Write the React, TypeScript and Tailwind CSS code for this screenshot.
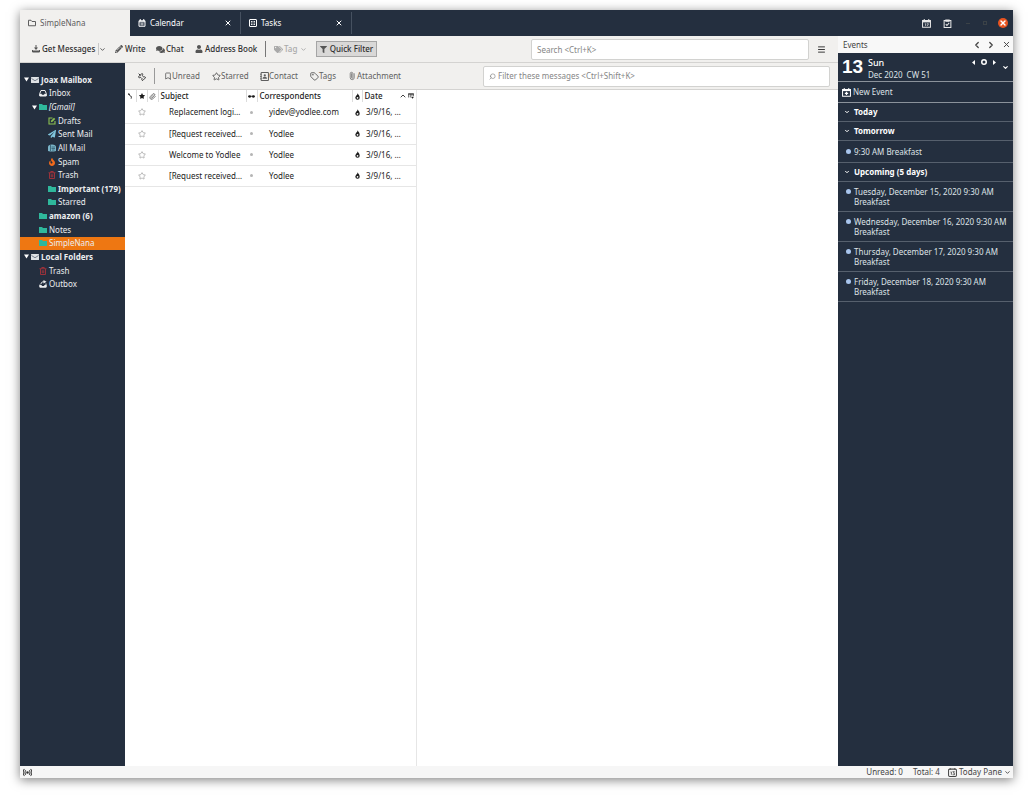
import type { ReactNode } from "react";
import { FaComments, FaFilter, FaFire, FaPaperPlane, FaPencilAlt, FaStar, FaTags, FaUser } from "react-icons/fa";
import { Bookmark, ChevronDown, ChevronLeft, ChevronRight, ChevronUp, Menu, Paperclip, Pin, Search, Star, Tag, X } from "lucide-react";

type IconProps = { className?: string };

function Svg({ className = "", children }: { className?: string; children: ReactNode }) {
  return (
    <svg viewBox="0 0 16 16" fill="none" stroke="currentColor" strokeWidth="1.8" aria-hidden="true" className={`shrink-0 ${className}`}>
      {children}
    </svg>
  );
}

const FolderOutline = ({ className }: IconProps) => (
  <Svg className={className}>
    <path d="M1 13.500v-11h5l2 2.500h7v8.500z" strokeLinejoin="round" strokeWidth="2" />
  </Svg>
);
const FolderSolid = ({ className }: IconProps) => (
  <Svg className={className}>
    <path d="M0 2h6l2 2h8v10H0z" fill="currentColor" stroke="none" />
  </Svg>
);
const CalendarTab = ({ className }: IconProps) => (
  <Svg className={className}>
    <path d="M2 3.500h12v11H2zM4.500 0v4M11.500 0v4M2 5.500h12" strokeWidth="2" />
    <path d="M5 8.500h6M5 11.500h6" strokeWidth="1.500" />
  </Svg>
);
const TasksIcon = ({ className }: IconProps) => (
  <Svg className={className}>
    <rect x="1" y="1" width="14" height="14" rx="1" strokeWidth="2" />
    <path d="M4 5h3M9 5h3M4 8h3M9 8h3M4 11h3M9 11h3" />
  </Svg>
);
const CalendarDay = ({ className }: IconProps) => (
  <Svg className={className}>
    <path d="M1 2.500h14v12H1zM4 0v3M12 0v3" />
    <path d="M1 4.500h14" strokeWidth="3" />
    <path d="M5 8.500h1.500v4M8.500 8.500h3l-2 4" strokeWidth="1.300" />
  </Svg>
);
const NewEventIcon = ({ className }: IconProps) => (
  <Svg className={className}>
    <path d="M1 2.500h14v12H1zM4 0v3M12 0v3" />
    <path d="M1 4h14" strokeWidth="3" />
    <path d="M8 6.500v6M5 9.500h6" strokeWidth="2.200" />
  </Svg>
);
const ClipboardCheck = ({ className }: IconProps) => (
  <Svg className={className}>
    <path d="M2 2.500h12v12.500H2z" />
    <path d="M5 2h6v2H5z" fill="currentColor" />
    <path d="M5 9l2 2.500L11 7" />
  </Svg>
);
const DownloadIcon = ({ className }: IconProps) => (
  <Svg className={className}>
    <path d="M8 0v7M1 10v4h14v-4" strokeWidth="2" />
    <path d="M4 5h8L8 10z" fill="currentColor" stroke="none" />
    <path d="M1 12.500h14" strokeWidth="3" />
  </Svg>
);
const MailIcon = ({ className }: IconProps) => (
  <svg viewBox="0 0 16 16" aria-hidden="true" className={`shrink-0 ${className}`}>
    <rect y="2" width="16" height="12" rx="1" fill="#dfe2e5" />
    <path d="M1 5l7 4.500L15 5" fill="none" stroke="#5a6573" strokeWidth="1.600" />
  </svg>
);
const InboxIcon = ({ className }: IconProps) => (
  <Svg className={className}>
    <path d="M1.500 14V9L4 3h8l2.500 6v5z" strokeWidth="2" />
    <path d="M1 9.500h4l1 2h4l1-2h4V14H1z" fill="currentColor" stroke="none" />
  </Svg>
);
const OutboxIcon = ({ className }: IconProps) => (
  <Svg className={className}>
    <path d="M2 9v5h12V7" strokeWidth="2" />
    <path d="M1 10h4l1 2h4l1-2h4v5H1z" fill="currentColor" stroke="none" />
    <path d="M4 8c0-3 2-4.500 6-4.500" strokeWidth="2" />
    <path d="M9 0l6 3.500L9 7z" fill="currentColor" stroke="none" />
  </Svg>
);
const DraftIcon = ({ className }: IconProps) => (
  <Svg className={className}>
    <path d="M9 2H2v12h12V8" strokeWidth="2.200" />
    <path d="M5.500 10.500l1-3.500L12 1.500 14.500 4 9 9.500z" fill="currentColor" stroke="none" />
  </Svg>
);
const ArchiveIcon = ({ className }: IconProps) => (
  <svg viewBox="0 0 16 16" aria-hidden="true" className={`shrink-0 ${className}`}>
    <path d="M0 14V6c0-3 3-5 8-5s8 2 8 5v8l-4 1H4z" fill="#79b3c7" />
    <path d="M5 2v12M7 6h7M7 9h7M8 12h5" stroke="#2f5568" strokeWidth="1.500" />
  </svg>
);
const TrashIcon = ({ className }: IconProps) => (
  <Svg className={className}>
    <path d="M1 3.500h14M5.500 3V1h5v2M3 4v11h10V4M6.500 6.500v6M9.500 6.500v6" />
  </Svg>
);
const ContactIcon = ({ className }: IconProps) => (
  <Svg className={className}>
    <rect x="2" y="1" width="13" height="14" rx="1" />
    <circle cx="8.500" cy="5.800" r="2" fill="currentColor" stroke="none" />
    <path d="M4.500 12c0-4.500 8-4.500 8 0z" fill="currentColor" stroke="none" />
    <path d="M0 4h3M0 8h3M0 12h3" strokeWidth="1.300" />
  </Svg>
);
const ThreadIcon = ({ className }: IconProps) => (
  <Svg className={className}>
    <path d="M4 2c4 0 1 5 5 6s3 2 2 7" strokeWidth="2.500" />
    <circle cx="5" cy="3" r="2" fill="currentColor" stroke="none" />
  </Svg>
);
const GlassesIcon = ({ className }: IconProps) => (
  <Svg className={className}>
    <circle cx="3.800" cy="8" r="3" fill="currentColor" stroke="none" />
    <circle cx="12.200" cy="8" r="3" fill="currentColor" stroke="none" />
    <path d="M0 7.500h16" strokeWidth="2" />
  </Svg>
);
const FlameIcon = ({ className }: IconProps) => (
  <svg viewBox="0 0 16 16" aria-hidden="true" className={`shrink-0 ${className}`}>
    <path d="M8 0c0 3 5 5 5 10a5 5 0 0 1-10 1c0-3 2-3 2.500-6C7 6 8 3 8 0z" fill="#1c1c1c" />
    <circle cx="8" cy="11" r="2" fill="#fff" />
  </svg>
);
const ColumnsIcon = ({ className }: IconProps) => (
  <Svg className={className}>
    <path d="M1 12V2h14v6M1 3h14M6 3v9M10.500 3v5" />
    <path d="M8 10h8l-4 5z" fill="currentColor" stroke="none" />
  </Svg>
);
const BroadcastIcon = ({ className }: IconProps) => (
  <Svg className={className}>
    <circle cx="8" cy="8" r="2.200" fill="currentColor" stroke="none" />
    <path d="M5 4c-2 2-2 6 0 8M11 4c2 2 2 6 0 8M2.500 2c-3 3-3 9 0 12M13.500 2c3 3 3 9 0 12" />
  </Svg>
);
const TodayIcon = ({ className }: IconProps) => (
  <Svg className={className}>
    <rect x="1" y="2" width="14" height="13" rx="2" />
    <path d="M4 0v3M12 0v3M4.500 7H6v5M8 6.500h3.500l-2 2.500 2 .5v2.500H8" strokeWidth="1.400" />
  </Svg>
);

type Folder = { name: string; icon: ReactNode; level: number; open?: boolean; style?: string; selected?: boolean };

const teal = <FolderSolid className="size-2 text-[#2fb89c]" />;
const trash = <TrashIcon className="size-2 text-[#a8333b]" />;
const folders: Folder[] = [
  { name: "Joax Mailbox", icon: <MailIcon className="size-2" />, level: 0, open: true, style: "font-bold" },
  { name: "Inbox", icon: <InboxIcon className="size-2" />, level: 1 },
  { name: "[Gmail]", icon: teal, level: 1, open: true, style: "italic" },
  { name: "Drafts", icon: <DraftIcon className="size-2 text-[#8cc152]" />, level: 2 },
  { name: "Sent Mail", icon: <FaPaperPlane className="size-2 shrink-0 text-[#7fc4dc]" />, level: 2 },
  { name: "All Mail", icon: <ArchiveIcon className="size-2" />, level: 2 },
  { name: "Spam", icon: <FaFire className="size-2 shrink-0 text-[#f06a1c]" />, level: 2 },
  { name: "Trash", icon: trash, level: 2 },
  { name: "Important (179)", icon: teal, level: 2, style: "font-bold" },
  { name: "Starred", icon: teal, level: 2 },
  { name: "amazon (6)", icon: teal, level: 1, style: "font-bold" },
  { name: "Notes", icon: teal, level: 1 },
  { name: "SimpleNana", icon: teal, level: 1, selected: true },
  { name: "Local Folders", icon: <MailIcon className="size-2" />, level: 0, open: true, style: "font-bold" },
  { name: "Trash", icon: trash, level: 1 },
  { name: "Outbox", icon: <OutboxIcon className="size-2" />, level: 1 },
];
const indents = ["pl-0.5", "pl-2.5", "pl-[19px]"];

const messages = [
  ["Replacement logi…", "yidev@yodlee.com"],
  ["[Request received…", "Yodlee"],
  ["Welcome to Yodlee", "Yodlee"],
  ["[Request received…", "Yodlee"],
];

const upcoming = ["Tuesday, December 15, 2020 9:30 AM", "Wednesday, December 16, 2020 9:30 AM", "Thursday, December 17, 2020 9:30 AM", "Friday, December 18, 2020 9:30 AM"];

function Tab({ icon, name }: { icon: ReactNode; name: string }) {
  return (
    <div className="my-0.5 flex w-[111px] items-center border-r border-[#465160] pr-2 pl-2 text-white">
      <button className="flex flex-1 items-center gap-1">
        {icon}
        {name}
      </button>
      <button aria-label={`Close ${name}`}>
        <X className="size-2" strokeWidth={3} />
      </button>
    </div>
  );
}

function Header() {
  return (
    <header className="flex h-[26px] shrink-0 bg-[#242f3f]">
      <button className="flex w-[110px] items-center gap-1 bg-[#f1f0ee] pl-2 text-[#5e5e5e]">
        <FolderOutline className="size-2" />
        SimpleNana
      </button>
      <Tab icon={<CalendarTab className="size-2" />} name="Calendar" />
      <Tab icon={<TasksIcon className="size-2" />} name="Tasks" />
      <div className="ml-auto flex items-center pr-[5px] text-[#e8e8e8]">
        <button aria-label="Calendar" className="mr-3"><CalendarDay className="size-[9px]" /></button>
        <button aria-label="Tasks" className="mr-3"><ClipboardCheck className="size-[9px]" /></button>
        <button aria-label="Minimize" className="mr-[9px] flex size-2 items-center justify-center"><span className="h-px w-1 bg-[#3b4247]" /></button>
        <button aria-label="Maximize" className="mr-[9px] flex size-2 items-center justify-center"><span className="size-1 border border-[#3b4247]" /></button>
        <button aria-label="Close window" className="flex size-[10px] items-center justify-center rounded-full bg-[#e95420] text-white">
          <X className="size-2" strokeWidth={4} />
        </button>
      </div>
    </header>
  );
}

function Toolbar() {
  return (
    <div className="flex h-[27px] shrink-0 items-center border-b border-[#d4d3d1] bg-[#f1f0ee] pl-3 font-medium text-[#2e2e2e]">
      <button className="flex w-[66px] items-center gap-0.5 whitespace-nowrap"><DownloadIcon className="size-2 text-[#555]" />Get Messages</button>
      <button aria-label="Get messages options" className="flex h-3 w-[17px] items-center border-l border-[#c8c8c8]"><ChevronDown className="size-[7px]" strokeWidth={2.5} /></button>
      <button className="flex w-[41px] items-center gap-0.5"><FaPencilAlt className="size-2 text-[#555]" />Write</button>
      <button className="flex w-[39px] items-center gap-px"><FaComments className="size-[9px] text-[#555]" />Chat</button>
      <button className="flex w-[70px] items-center gap-0.5 whitespace-nowrap"><FaUser className="size-2 text-[#555]" />Address Book</button>
      <span className="h-4 w-[9px] border-l border-[#777]" />
      <button disabled className="flex w-[42px] items-center gap-px text-[#a9a9a9]"><FaTags className="size-[9px]" />Tag<ChevronDown className="ml-0.5 size-[7px]" strokeWidth={3} /></button>
      <button aria-pressed="true" className="flex h-4 w-[61px] items-center justify-center gap-[3px] border border-[#a5a5a5] bg-[#d9d8d7] whitespace-nowrap"><FaFilter className="size-[7px] text-[#555]" />Quick Filter</button>
      <input aria-label="Search" placeholder="Search <Ctrl+K>" className="ml-auto h-[21px] w-[278px] rounded-xs border border-[#d2d2d0] bg-white px-[5px] font-normal placeholder:text-[#868686]" />
      <button aria-label="Menu" className="mr-3 ml-2"><Menu className="size-[9px]" strokeWidth={2.5} /></button>
    </div>
  );
}

function FilterBar() {
  return (
    <div className="flex h-[27px] shrink-0 items-center border-b border-[#d4d3d1] bg-[#f1f0ee] pr-2 pl-3 text-[#5f5f5f]">
      <button aria-label="Keep filters" className="w-[17px]"><Pin className="size-[9px] rotate-135 text-[#333]" strokeWidth={2.5} /></button>
      <span className="h-4 w-2.5 border-l border-[#999]" />
      <button className="flex w-12 items-center"><Bookmark className="size-2" strokeWidth={2.5} />Unread</button>
      <button className="flex w-12 items-center"><Star className="size-[9px]" strokeWidth={2.5} />Starred</button>
      <button className="flex w-[50px] items-center"><ContactIcon className="size-[9px]" />Contact</button>
      <button className="flex w-[38px] items-center"><Tag className="size-[9px]" strokeWidth={2.5} />Tags</button>
      <button className="flex items-center gap-px"><Paperclip className="size-2 -rotate-45" strokeWidth={2} />Attachment</button>
      <label className="ml-auto flex h-[21px] w-[347px] items-center gap-0.5 rounded-xs border border-[#d2d2d0] bg-white px-[5px]">
        <Search className="size-[7px] -scale-x-100 text-[#777]" strokeWidth={2} />
        <input aria-label="Filter these messages" placeholder="Filter these messages <Ctrl+Shift+K>" className="min-w-0 flex-1 outline-none placeholder:text-[#868686]" />
      </label>
    </div>
  );
}

function FolderTree() {
  return (
    <nav aria-label="Folders" className="w-[105px] shrink-0 bg-[#242f3f] pt-[10px] text-[#eceef0]">
      <ul className="grid h-[218px] auto-rows-fr">
        {folders.map((f, i) => (
          <li key={i} className={`flex ${f.selected ? "bg-[#ee7712]" : ""}`}>
            <button className={`flex w-full items-center whitespace-nowrap ${indents[f.level]} ${f.style ?? ""}`}>
              <span className="flex w-[9px] shrink-0 items-center pl-0.5">
                {f.open && <svg viewBox="0 0 10 10" aria-hidden="true" className="size-[5px]"><path d="M0 1h10L5 9z" fill="#fff" /></svg>}
              </span>
              {f.icon}
              <span className="ml-0.5">{f.name}</span>
            </button>
          </li>
        ))}
      </ul>
    </nav>
  );
}

function MessageList() {
  const sep = "border-r border-[#dcdcdc]";
  return (
    <section className="w-[292px] shrink-0 border-r border-[#e6e6e6] text-[#1c1c1c]">
      <table className="w-full table-fixed border-collapse">
        <colgroup>
          <col className="w-[11px]" /><col className="w-[11px]" /><col className="w-[11px]" /><col className="w-[88px]" /><col className="w-[11px]" /><col className="w-[95px]" /><col className="w-[10px]" /><col /><col className="w-[8px]" />
        </colgroup>
        <thead>
          <tr className="h-3 text-left">
            <th aria-label="Thread" className={sep}><ThreadIcon className="ml-0.5 size-1.5" /></th>
            <th aria-label="Starred" className={sep}><FaStar className="mx-auto size-1.5" /></th>
            <th aria-label="Attachments" className={sep}><Paperclip className="mx-auto size-[7px] text-[#555]" strokeWidth={2.5} /></th>
            <th className={`${sep} pl-0.5 font-medium`}>Subject</th>
            <th aria-label="Read" className={sep}><GlassesIcon className="mx-auto size-[7px]" /></th>
            <th className={`${sep} pl-0.5 font-medium`}>Correspondents</th>
            <th aria-label="Junk" className={sep}><FlameIcon className="mx-auto size-[7px]" /></th>
            <th className="font-medium"><span className="flex items-center justify-between pl-0.5">Date<ChevronUp className="mr-px size-2" strokeWidth={2.5} /></span></th>
            <th aria-label="Columns"><ColumnsIcon className="size-[6px]" /></th>
          </tr>
        </thead>
        <tbody>
          {messages.map(([subject, from], i) => (
            <tr key={i} className="h-[21px] border-b border-[#e6e6e6] whitespace-nowrap">
              <td />
              <td><Star className="mx-auto size-2 text-[#999]" strokeWidth={2} /></td>
              <td />
              <td className="pl-[11px]">{subject}</td>
              <td><span className="mx-auto block size-[3px] rounded-full bg-[#b5b5b5]" /></td>
              <td className="pl-3">{from}</td>
              <td><FlameIcon className="mx-auto size-[7px]" /></td>
              <td className="pl-1">3/9/16, …</td>
              <td />
            </tr>
          ))}
        </tbody>
      </table>
    </section>
  );
}

function GroupTitle({ children }: { children: ReactNode }) {
  return (
    <h3 className="border-b border-[#56606d]">
      <button className="flex h-[18px] w-full items-center gap-1 pl-1.5 font-bold text-white">
        <ChevronDown className="size-[6px]" strokeWidth={4} />
        {children}
      </button>
    </h3>
  );
}

function EventsPane() {
  return (
    <aside className="w-[175px] shrink-0 bg-[#242f3f] text-[#dfe3e7]">
      <div className="flex h-[17px] items-center bg-[#f8f8f8] pr-0.5 pl-[5px] text-[#444]">
        <h2 className="flex-1">Events</h2>
        <button aria-label="Previous" className="mr-1"><ChevronLeft className="size-[10px]" strokeWidth={3} /></button>
        <button aria-label="Next" className="mr-1.5"><ChevronRight className="size-[10px]" strokeWidth={3} /></button>
        <button aria-label="Close events"><X className="size-[9px]" strokeWidth={2.5} /></button>
      </div>
      <div className="flex h-[29px] items-start border-b border-[#8b929b] pr-1 pl-1">
        <span className="w-[26px] pt-1 font-['Liberation_Sans',sans-serif] text-[19px] leading-5 font-bold text-white">13</span>
        <div className="flex-1 pt-1">
          <div className="text-[9px] leading-[11px] font-medium text-white">Sun</div>
          <div className="flex gap-1 leading-[13px]"><span>Dec 2020</span><span>CW 51</span></div>
        </div>
        <div className="flex items-center gap-1.5 pt-1.5 pr-1.5">
          <button aria-label="Previous day"><svg viewBox="0 0 6 10" className="h-[5px] w-[3px]"><path d="M6 0v10L0 5z" fill="#fff" /></svg></button>
          <button aria-label="Go to today"><svg viewBox="0 0 12 12" className="size-1.5"><circle cx="6" cy="6" r="4.500" fill="none" stroke="#fff" strokeWidth="3" /></svg></button>
          <button aria-label="Next day"><svg viewBox="0 0 6 10" className="h-[5px] w-[3px]"><path d="M0 0v10l6-5z" fill="#fff" /></svg></button>
        </div>
        <button aria-label="Show month" className="self-center text-white"><ChevronDown className="size-[7px]" strokeWidth={4} /></button>
      </div>
      <button className="flex h-[21px] w-full items-center gap-0.5 border-b border-[#8b929b] pl-1"><NewEventIcon className="size-[9px] text-white" />New Event</button>
      <GroupTitle>Today</GroupTitle>
      <GroupTitle>Tomorrow</GroupTitle>
      <div className="flex h-[22px] items-center gap-[3px] border-b border-[#56606d] pl-2"><span className="size-[5px] rounded-full bg-[#a9c6ee]" />9:30 AM Breakfast</div>
      <GroupTitle>Upcoming (5 days)</GroupTitle>
      <ul>
        {upcoming.map((when) => (
          <li key={when} className="flex h-[30px] items-start gap-[3px] border-b border-[#56606d] pt-[5px] pl-2 leading-[10px] whitespace-nowrap">
            <span className="mt-0.5 size-[5px] shrink-0 rounded-full bg-[#a9c6ee]" />
            <span>{when}<br />Breakfast</span>
          </li>
        ))}
      </ul>
    </aside>
  );
}

export default function App() {
  return (
    <div className="flex min-h-screen flex-col bg-white pt-[10px] pr-[15px] pb-[22px] pl-5 font-['Noto_Sans',sans-serif] text-[8px] leading-3">
      <div className="flex flex-1 flex-col bg-white shadow-[0_2px_10px_rgba(0,0,0,0.5)]">
        <Header />
        <div className="flex flex-1">
          <div className="flex min-w-0 flex-1 flex-col">
            <Toolbar />
            <main className="flex flex-1">
              <FolderTree />
              <div className="flex min-w-0 flex-1 flex-col">
                <FilterBar />
                <div className="flex flex-1"><MessageList /></div>
              </div>
            </main>
          </div>
          <EventsPane />
        </div>
        <footer className="flex h-3 shrink-0 items-center bg-[#f6f6f6] pr-0.5 pl-[3px] text-[#444]">
          <BroadcastIcon className="size-[9px] text-[#333]" />
          <span className="ml-auto">Unread: 0</span>
          <span className="ml-2.5">Total: 4</span>
          <button className="ml-2 flex items-center gap-0.5"><TodayIcon className="size-[9px]" />Today Pane<ChevronDown className="size-[7px]" strokeWidth={3} /></button>
        </footer>
      </div>
    </div>
  );
}
